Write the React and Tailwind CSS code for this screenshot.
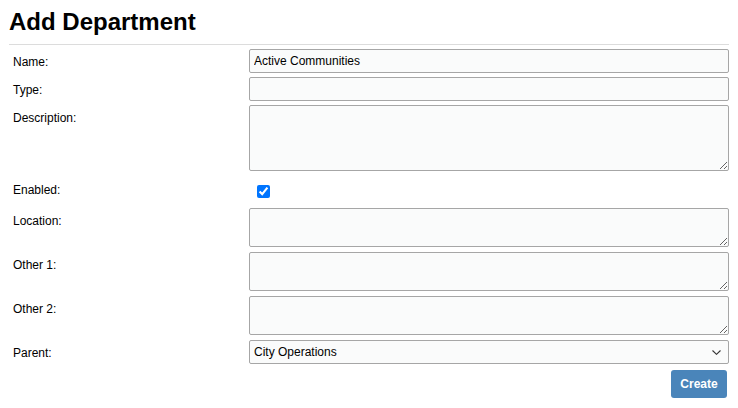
import { useState } from 'react'

const FIELD =
  'block w-full rounded-[2px] border border-[#a6a6a6] bg-[#fafbfb] px-[4px] text-[12px] text-black outline-none'

function Row({ label, labelPad = 'pt-[6px]', children }) {
  return (
    <div className="flex">
      <div className={`w-[240px] shrink-0 pl-1 text-[12px] leading-[14px] text-black ${labelPad}`}>{label}</div>
      <div className="w-[480px]">{children}</div>
    </div>
  )
}

export default function App() {
  const [name, setName] = useState('Active Communities')
  const [enabled, setEnabled] = useState(true)
  const [parent, setParent] = useState('City Operations')

  return (
    <div className="min-h-[408px] bg-white px-[9px] font-['Liberation_Sans',Arial,sans-serif]">
      <h1 className="pt-2 text-[24px] font-bold leading-[28px] text-black">Add Department</h1>
      <div className="mt-2 h-px bg-[#dcdcdc]" />

      <form className="flex flex-col gap-1 pt-1" onSubmit={(e) => e.preventDefault()}>
        <Row label="Name:">
          <input className={`${FIELD} h-[24px]`} value={name} onChange={(e) => setName(e.target.value)} />
        </Row>
        <Row label="Type:">
          <input className={`${FIELD} h-[24px]`} />
        </Row>
        <Row label="Description:">
          <textarea className={`${FIELD} h-[66px]`} />
        </Row>
        <Row label="Enabled:" labelPad="pt-[8px]">
          <div className="h-[29px] pl-2 pt-[10px]">
            <input
              type="checkbox"
              className="block h-[13px] w-[13px] accent-[#0075ff]"
              checked={enabled}
              onChange={(e) => setEnabled(e.target.checked)}
            />
          </div>
        </Row>
        <Row label="Location:">
          <div className="h-[40px]">
            <textarea className={`${FIELD} h-[39px]`} />
          </div>
        </Row>
        <Row label="Other 1:">
          <div className="h-[40px]">
            <textarea className={`${FIELD} h-[39px]`} />
          </div>
        </Row>
        <Row label="Other 2:">
          <div className="h-[40px]">
            <textarea className={`${FIELD} h-[39px]`} />
          </div>
        </Row>
        <Row label="Parent:">
          <div className="relative">
            <select
              className={`${FIELD} h-[24px] appearance-none`}
              value={parent}
              onChange={(e) => setParent(e.target.value)}
            >
              <option>City Operations</option>
              <option>Public Works</option>
              <option>Parks and Recreation</option>
            </select>
            <svg
              className="pointer-events-none absolute right-[8px] top-[10px] h-[5px] w-[9px]"
              viewBox="0 0 9 5"
              fill="none"
              stroke="#333"
              strokeWidth="1.1"
            >
              <path d="M0.5 0.5 L4.5 4.3 L8.5 0.5" />
            </svg>
          </div>
        </Row>

        <div className="mt-[2px] flex justify-end pr-[2px]">
          <button
            type="submit"
            className="h-[28px] w-[56px] rounded-[3px] bg-[#4a85ba] text-[12px] font-bold text-white"
          >
            Create
          </button>
        </div>
      </form>
    </div>
  )
}
